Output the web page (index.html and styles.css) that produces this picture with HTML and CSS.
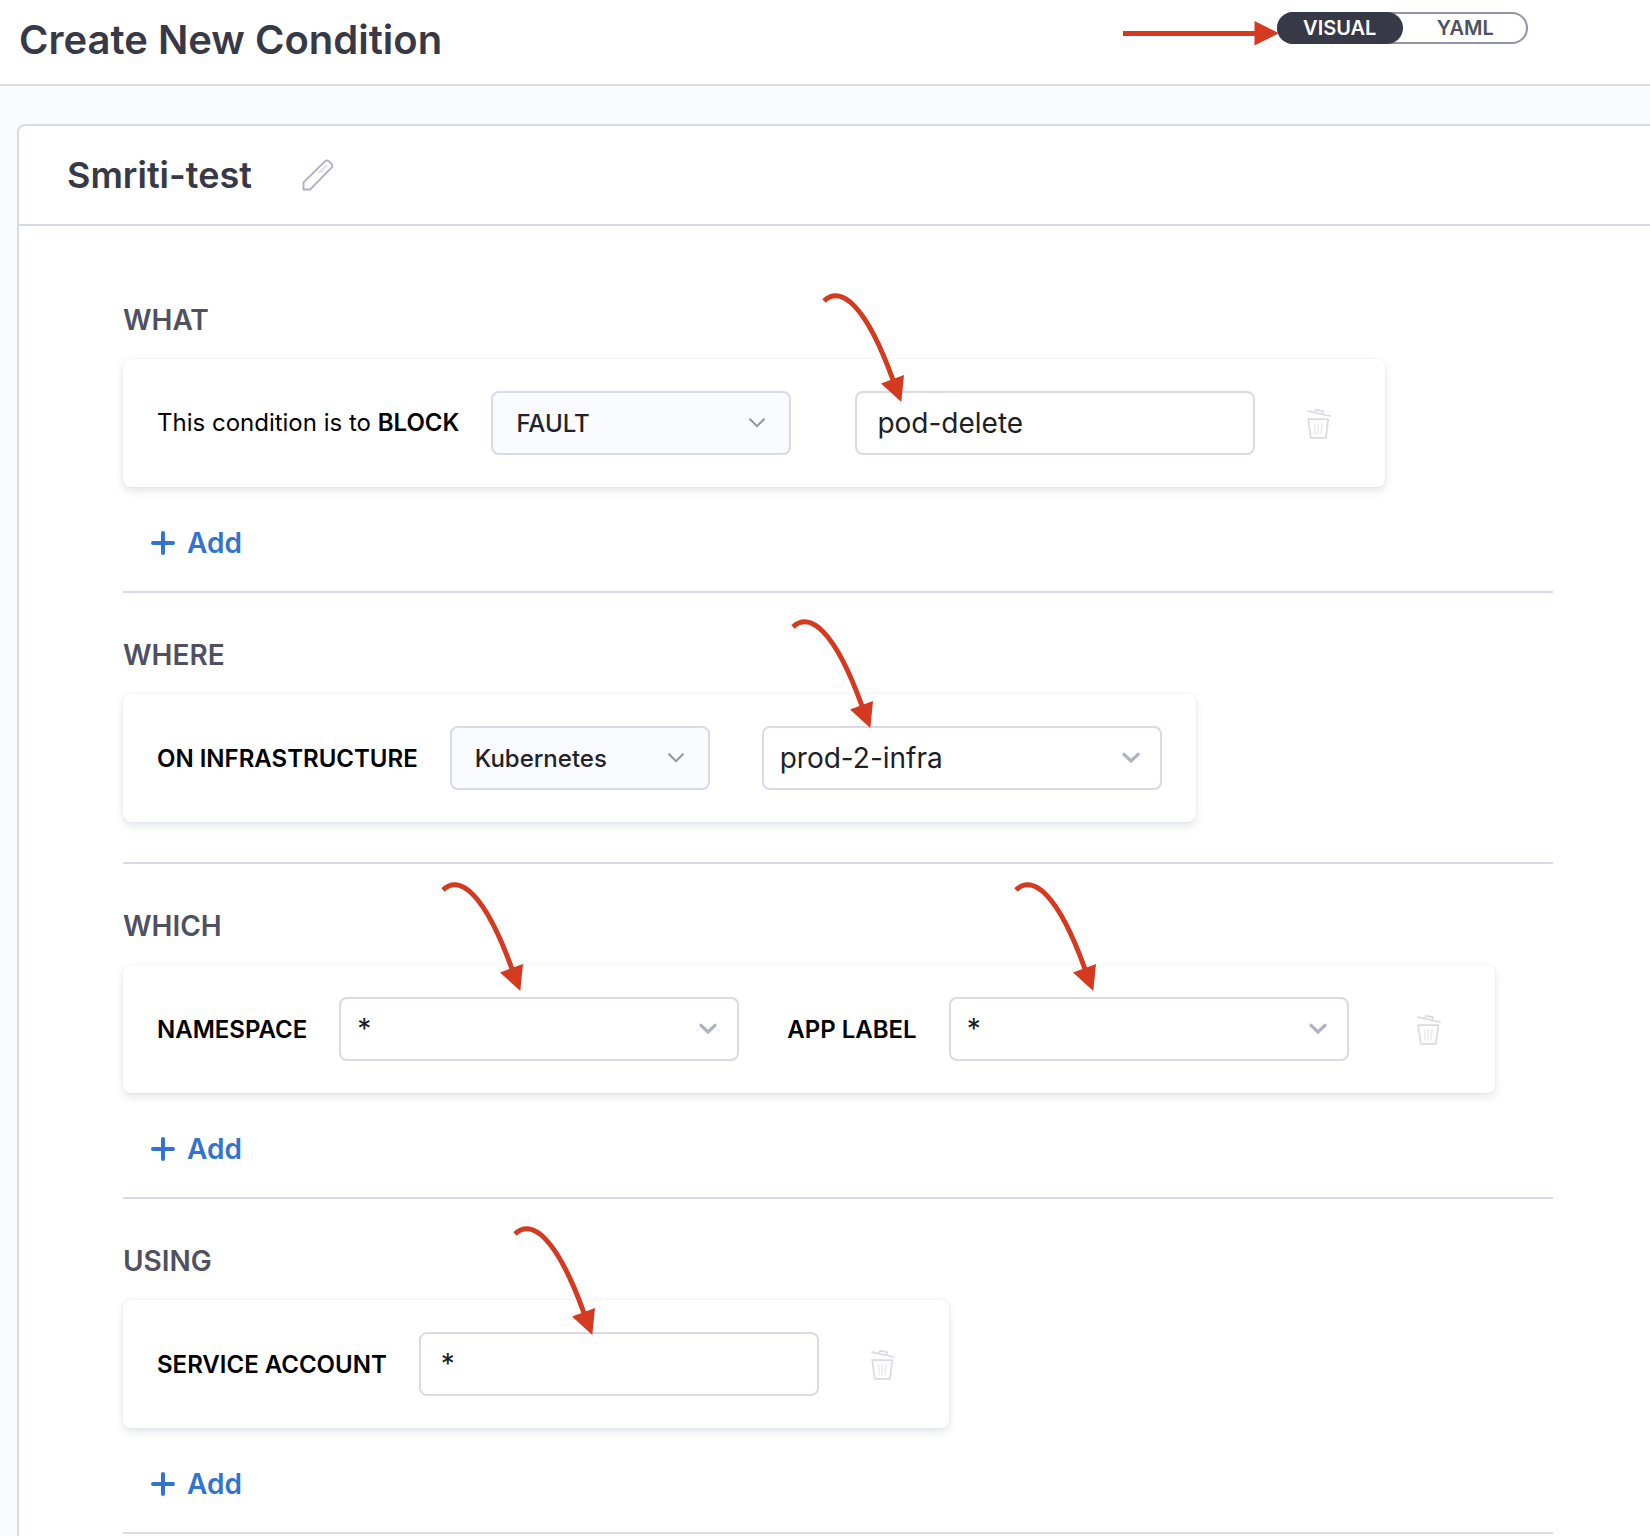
FILE: index.html
```html
<!DOCTYPE html>
<html lang="en">
<head>
<meta charset="utf-8">
<meta name="viewport" content="width=device-width, initial-scale=1">
<title>Create New Condition</title>
<link rel="stylesheet" href="styles.css">
</head>
<body>
<svg class="sprite" aria-hidden="true">
  <symbol id="trash" viewBox="0 0 24 32">
    <g fill="none" stroke="#d9dae5" stroke-width="1.7" stroke-linejoin="round" stroke-linecap="round">
      <path d="M1 4.200 23 9M8.200 5.600l.7-2.800 7.200 1.400-.6 3M1.200 12.200h20l-2.200 18.600H3.800z"/>
      <path d="M7.600 17l.6 9.800M11.200 17v9.800M14.800 17l-.6 9.800" stroke="#ececf2"/>
    </g>
  </symbol>
  <symbol id="chevron-thin" viewBox="0 0 18 12">
    <path d="M1.500 1.800 9 9.200l7.500-7.400" fill="none" stroke="#9293ab" stroke-width="2"/>
  </symbol>
  <symbol id="chevron-bold" viewBox="0 0 18 12">
    <path d="M2 2.300 9 9l7-6.700" fill="none" stroke="#b0b1c4" stroke-width="3.200" stroke-linecap="round"/>
  </symbol>
  <symbol id="plus" viewBox="0 0 24 24">
    <path d="M12 2v20M2 12h20" stroke="#3373d0" stroke-width="4" stroke-linecap="round"/>
  </symbol>
  <symbol id="arrow" viewBox="0 0 90 112">
    <path d="M5 11C22-5 47 15 74 90" fill="none" stroke="#d33a20" stroke-width="5"/>
    <path d="M62 93.500 85 85l-2.700 27z" fill="#d33a20"/>
  </symbol>
</svg>

<header class="topbar">
  <h1 class="title">Create New Condition</h1>
  <div class="toggle" role="group" aria-label="Editor mode">
    <button type="button" class="toggle-option active" aria-pressed="true">VISUAL</button>
    <button type="button" class="toggle-option" aria-pressed="false">YAML</button>
    <svg class="pointer" viewBox="0 0 156 26" aria-hidden="true">
      <path d="M0 13.500h133" stroke="#d33a20" stroke-width="5"/>
      <path d="M131.500 1l24.500 12.200-24.500 12.300z" fill="#d33a20"/>
    </svg>
  </div>
</header>

<main class="panel">
  <div class="panel-head">
    <h2 class="name">Smriti-test</h2>
    <button type="button" class="icon-button" aria-label="Edit name">
      <svg class="pencil" viewBox="0 0 32 32" aria-hidden="true">
        <path d="M1.500 30.500v-7.200L23 2.200q1.900-1.400 4 .2l2.200 2.100q1.900 2.300.3 4.200L8.200 30.500z" fill="none" stroke="#b0b1c8" stroke-width="1.900"/>
        <path d="M17 14 25 6.200" stroke="#dcdcea" stroke-width="2"/>
      </svg>
    </button>
  </div>

  <form class="sections">
    <section class="section">
      <h3 class="heading">WHAT</h3>
      <div class="card">
        <label class="label" for="block-type">This condition is to <b>BLOCK</b></label>
        <div class="field tinted wide">
          <select id="block-type"><option>FAULT</option></select>
          <svg class="chevron"><use href="#chevron-thin"/></svg>
        </div>
        <div class="field value after-wide">
          <input type="text" value="pod-delete" aria-label="Fault name">
          <svg class="arrow arrow-what" aria-hidden="true"><use href="#arrow"/></svg>
        </div>
        <button type="button" class="icon-button remove" aria-label="Remove fault"><svg class="trash"><use href="#trash"/></svg></button>
      </div>
      <button type="button" class="add"><svg class="plus"><use href="#plus"/></svg>Add</button>
    </section>

    <section class="section">
      <h3 class="heading">WHERE</h3>
      <div class="card">
        <label class="label strong" for="infra-type">ON INFRASTRUCTURE</label>
        <div class="field tinted">
          <select id="infra-type"><option>Kubernetes</option></select>
          <svg class="chevron"><use href="#chevron-thin"/></svg>
        </div>
        <div class="field value after-tinted">
          <select aria-label="Infrastructure"><option>prod-2-infra</option></select>
          <svg class="chevron"><use href="#chevron-bold"/></svg>
          <svg class="arrow arrow-where" aria-hidden="true"><use href="#arrow"/></svg>
        </div>
      </div>
    </section>

    <section class="section">
      <h3 class="heading">WHICH</h3>
      <div class="card">
        <label class="label strong" for="namespace">NAMESPACE</label>
        <div class="field value">
          <select id="namespace"><option>*</option></select>
          <svg class="chevron"><use href="#chevron-bold"/></svg>
          <svg class="arrow arrow-namespace" aria-hidden="true"><use href="#arrow"/></svg>
        </div>
        <label class="label strong next" for="app-label">APP LABEL</label>
        <div class="field value">
          <select id="app-label"><option>*</option></select>
          <svg class="chevron"><use href="#chevron-bold"/></svg>
          <svg class="arrow arrow-label" aria-hidden="true"><use href="#arrow"/></svg>
        </div>
        <button type="button" class="icon-button remove next" aria-label="Remove application"><svg class="trash"><use href="#trash"/></svg></button>
      </div>
      <button type="button" class="add"><svg class="plus"><use href="#plus"/></svg>Add</button>
    </section>

    <section class="section">
      <h3 class="heading">USING</h3>
      <div class="card">
        <label class="label strong" for="account">SERVICE ACCOUNT</label>
        <div class="field value">
          <input id="account" type="text" value="*">
          <svg class="arrow arrow-using" aria-hidden="true"><use href="#arrow"/></svg>
        </div>
        <button type="button" class="icon-button remove" aria-label="Remove service account"><svg class="trash"><use href="#trash"/></svg></button>
      </div>
      <button type="button" class="add"><svg class="plus"><use href="#plus"/></svg>Add</button>
    </section>
  </form>
</main>
</body>
</html>
```
FILE: styles.css
```css
*,
*::before,
*::after {
  box-sizing: border-box;
}

body {
  display: flex;
  flex-direction: column;
  min-height: 100vh;
  margin: 0;
  background: #fafbff;
  color: #000;
  font-family: Inter, "Liberation Sans", sans-serif;
  font-size: 24px;
}

h1,
h2,
h3 {
  margin: 0;
}

button,
input,
select {
  margin: 0;
  font-family: inherit;
}

button {
  padding: 0;
  border: 0;
  background: none;
  cursor: pointer;
}

.sprite {
  display: none;
}

/* Top bar */
.topbar {
  display: flex;
  align-items: flex-start;
  justify-content: space-between;
  padding: 12px 122px 16px 19px;
  border-bottom: 2px solid #d9dae5;
  background: #fff;
}

.title {
  color: #383946;
  font-size: 40px;
  font-weight: 600;
  line-height: 56px;
}

.toggle {
  position: relative;
  display: flex;
  width: 251px;
  height: 32px;
  border-radius: 16px;
  box-shadow: inset 0 0 0 2px #9293ab;
}

.toggle-option {
  flex: 1;
  border-radius: 16px;
  color: #4f5162;
  font-size: 20px;
  font-weight: 600;
  line-height: 32px;
}

.toggle-option.active {
  background: #383946;
  color: #fff;
}

.pointer {
  position: absolute;
  top: 8px;
  right: 249px;
  width: 156px;
  height: 26px;
}

/* Panel */
.panel {
  flex: 1;
  margin: 38px 0 0 17px;
  border: 2px solid #d9dae5;
  border-width: 2px 0 0 2px;
  border-radius: 8px 0 0 0;
  background: #fff;
}

.panel-head {
  display: flex;
  align-items: center;
  gap: 50px;
  padding: 25px 48px;
  border-bottom: 2px solid #d9dae5;
}

.name {
  color: #383946;
  font-size: 36px;
  font-weight: 600;
  line-height: 48px;
}

.icon-button {
  display: flex;
  align-items: center;
  justify-content: center;
}

.pencil {
  width: 32px;
  height: 32px;
}

.sections {
  padding: 32px 97px 0 104px;
}

.section {
  display: flex;
  flex-direction: column;
  align-items: flex-start;
  padding: 46px 0 40px;
  border-bottom: 2px solid #d9dae5;
}

.section:has(.add) {
  padding-bottom: 32px;
}

.heading {
  margin-bottom: 23px;
  color: #4f5162;
  font-size: 28px;
  font-weight: 600;
  line-height: 32px;
}

.card {
  display: flex;
  align-items: center;
  padding: 32px 34px;
  border-radius: 8px;
  background: #fff;
  box-shadow: 0 0 2px rgba(40, 41, 61, 0.08), 0 4px 8px rgba(96, 97, 112, 0.16);
}

.label {
  margin-right: 32px;
  line-height: 32px;
}

.label b,
.label.strong {
  font-weight: 600;
}

.label.strong {
  padding-top: 2px;
}

.next {
  margin-left: 48px;
}

/* Fields */
.field {
  position: relative;
  display: grid;
  align-items: center;
  width: 260px;
}

.field.wide {
  width: 300px;
}

.field.value {
  width: 400px;
}

.field.after-wide {
  margin-left: 64px;
}

.field.after-tinted {
  margin-left: 52px;
}

.field select,
.field input {
  grid-area: 1 / 1;
  width: 100%;
  height: 64px;
  padding: 0 20px;
  appearance: none;
  border: 2px solid #d9dae5;
  border-radius: 8px;
  background: #fff;
  color: #1c2127;
  font-size: 28px;
}

.field select {
  padding: 0 16px;
}

.field.tinted select {
  padding: 0 23px;
  background: #fafbff;
  color: #22222a;
  font-size: 24px;
  font-weight: 500;
}

.chevron {
  grid-area: 1 / 1;
  justify-self: end;
  width: 18px;
  height: 12px;
  margin-right: 22px;
  pointer-events: none;
}

.tinted .chevron {
  margin-right: 25px;
}

.remove {
  width: 64px;
  height: 64px;
}

.remove:not(.next) {
  margin-left: 32px;
}

.trash {
  width: 24px;
  height: 32px;
}

.add {
  display: flex;
  align-items: center;
  gap: 12px;
  margin: 40px 0 0 28px;
  color: #3373d0;
  font-size: 28px;
  font-weight: 600;
  line-height: 32px;
}

.plus {
  width: 24px;
  height: 24px;
}

/* Callout arrows drawn over the cards */
.arrow {
  position: absolute;
  width: 90px;
  height: 112px;
  pointer-events: none;
}

.arrow-what {
  top: -101px;
  left: -36px;
}

.arrow-where {
  top: -110px;
  left: 26px;
}

.arrow-namespace {
  top: -118px;
  left: 99px;
}

.arrow-label {
  top: -118px;
  left: 62px;
}

.arrow-using {
  top: -109px;
  left: 91px;
}
```
